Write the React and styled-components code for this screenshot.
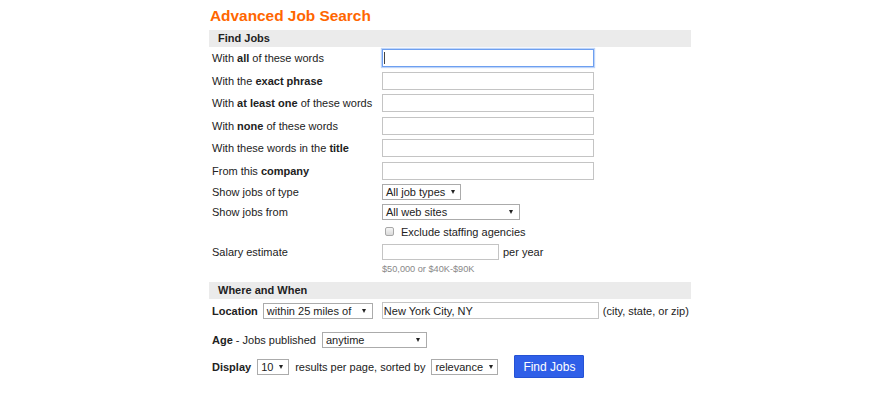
import React from "react";
import styled, { createGlobalStyle, css } from "styled-components";

const Global = createGlobalStyle`
  body {
    margin: 0;
    background: #fff;
    color: #222;
    font-family: "Liberation Sans", Arial, sans-serif;
    font-size: 11px;
  }
`;

const Page = styled.div`
  width: 482px;
  margin-left: 209px;
  padding-top: 6px;
`;

const Title = styled.h1`
  margin: 0;
  padding-left: 1px;
  font-size: 15.4px;
  line-height: 20px;
  font-weight: bold;
  color: #ff6600;
`;

const SectionBar = styled.div`
  margin-top: ${(p) => p.$mt}px;
  height: 17px;
  line-height: 17px;
  padding-left: 9px;
  background: #ebebeb;
  font-weight: bold;
`;

const Row = styled.div`
  display: flex;
  align-items: center;
  height: ${(p) => p.$h}px;
  margin-top: ${(p) => p.$mt || 0}px;
  padding-left: 3px;
  white-space: nowrap;
`;

const Label = styled.div`
  width: 170px;
  flex-shrink: 0;
`;

const Field = styled.span`
  position: relative;
  display: inline-flex;
  margin-left: ${(p) => p.$ml || 0}px;
  ${(p) =>
    p.$caret &&
    css`
      &::after {
        content: "";
        position: absolute;
        left: 2px;
        top: 3px;
        width: 1px;
        height: 12px;
        background: #444;
      }
    `}
`;

const TextInput = styled.input`
  box-sizing: border-box;
  width: ${(p) => p.$w}px;
  height: ${(p) => p.$h || 18}px;
  margin: 0;
  padding: 0 1px;
  border: 1px solid #c4c4c4;
  background: #fff;
  color: #222;
  font: 11px "Liberation Sans", Arial, sans-serif;
  outline: none;
  ${(p) =>
    p.$focused &&
    css`
      border-color: #6d9ff0;
      box-shadow: 0 0 1px 1px rgba(110, 160, 240, 0.45);
    `}
`;

const Select = styled.div`
  box-sizing: border-box;
  display: inline-flex;
  align-items: center;
  justify-content: space-between;
  width: ${(p) => p.$w}px;
  height: ${(p) => p.$h || 16}px;
  margin-left: ${(p) => p.$ml || 0}px;
  padding: 0 6px 0 3px;
  border: 1px solid #ababab;
  background: #fff;
  flex-shrink: 0;
`;

const Arrow = styled.span`
  width: 0;
  height: 0;
  margin-left: 6px;
  border-left: 2.5px solid transparent;
  border-right: 2.5px solid transparent;
  border-top: 4px solid #222;
`;

const Checkbox = styled.span`
  box-sizing: border-box;
  width: 9px;
  height: 9px;
  margin: 0 7px 0 3px;
  border: 1px solid #a8a8a8;
  border-radius: 2px;
  background: linear-gradient(#f6f6f6, #dadada);
`;

const Hint = styled.div`
  height: 14px;
  line-height: 14px;
  padding-left: 173px;
  font-size: 9.2px;
  color: #888;
`;

const Text = styled.span`
  margin-left: ${(p) => p.$ml || 0}px;
`;

const FindButton = styled.button`
  box-sizing: border-box;
  width: 70px;
  height: 23px;
  margin-left: 16px;
  padding: 0;
  border: 1px solid #2552d4;
  border-radius: 1px;
  background: #2f5fe8;
  color: #fff;
  font: 12px "Liberation Sans", Arial, sans-serif;
  cursor: pointer;
`;

const SelectBox = ({ w, ml, children }) => (
  <Select $w={w} $ml={ml}>
    <span>{children}</span>
    <Arrow />
  </Select>
);

const wordRows = [
  ["With ", "all", " of these words"],
  ["With the ", "exact phrase", ""],
  ["With ", "at least one", " of these words"],
  ["With ", "none", " of these words"],
  ["With these words in the ", "title", ""],
  ["From this ", "company", ""],
];

export default function App() {
  return (
    <>
      <Global />
      <Page>
        <Title>Advanced Job Search</Title>
        <SectionBar $mt={4}>Find Jobs</SectionBar>

        {wordRows.map(([pre, bold, post], i) => (
          <Row key={i} $h={22.5}>
            <Label>
              {pre}
              <b>{bold}</b>
              {post}
            </Label>
            <Field $caret={i === 0}>
              <TextInput $w={212} $focused={i === 0} />
            </Field>
          </Row>
        ))}

        <Row $h={20}>
          <Label>Show jobs of type</Label>
          <SelectBox w={79}>All job types</SelectBox>
        </Row>
        <Row $h={20}>
          <Label>Show jobs from</Label>
          <SelectBox w={138}>All web sites</SelectBox>
        </Row>
        <Row $h={19}>
          <Label />
          <Checkbox />
          <span>Exclude staffing agencies</span>
        </Row>
        <Row $h={21}>
          <Label>Salary estimate</Label>
          <Field>
            <TextInput $w={117} $h={16} />
          </Field>
          <Text $ml={4}>per year</Text>
        </Row>
        <Hint>$50,000 or $40K-$90K</Hint>

        <SectionBar $mt={6}>Where and When</SectionBar>
        <Row $h={17} $mt={3}>
          <b>Location</b>
          <SelectBox w={110} ml={5}>within 25 miles of</SelectBox>
          <Field $ml={9}>
            <TextInput $w={217} $h={17} defaultValue="New York City, NY" />
          </Field>
          <Text $ml={4}>(city, state, or zip)</Text>
        </Row>
        <Row $h={17} $mt={12}>
          <b>Age</b>
          <span>&nbsp;- Jobs published</span>
          <SelectBox w={105} ml={6}>anytime</SelectBox>
        </Row>
        <Row $h={23} $mt={7}>
          <b>Display</b>
          <SelectBox w={32} ml={6}>10</SelectBox>
          <Text $ml={6}>results per page, sorted by</Text>
          <SelectBox w={67} ml={6}>relevance</SelectBox>
          <FindButton>Find Jobs</FindButton>
        </Row>
      </Page>
    </>
  );
}
